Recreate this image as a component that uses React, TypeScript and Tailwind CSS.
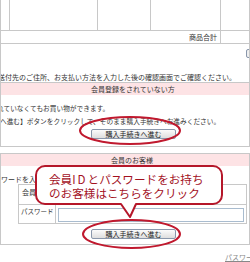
const font = { fontFamily: '"Noto Sans CJK JP", "Noto Sans", sans-serif' };

function Btn({ label }: { label: string }) {
  return (
    <div className="flex h-[10px] w-[85px] items-center justify-center rounded-[2px] border border-[#8a97ab] bg-gradient-to-b from-[#fbfbfb] to-[#dedede] text-[7px] leading-none text-[#222]">
      {label}
    </div>
  );
}

function Callout() {
  return (
    <div className="absolute left-[35px] top-[165px] h-[54px] w-[189px]">
      <svg width="189" height="54" viewBox="0 0 189 54" className="absolute inset-0">
        <path
          d="M10,1 H178 A9,9 0 0 1 187,10 V30 A9,9 0 0 1 178,39 H101 L95,52 L86,39 H10 A9,9 0 0 1 1,30 V10 A9,9 0 0 1 10,1 Z"
          fill="#fff"
          stroke="#b5172a"
          strokeWidth="2"
          strokeLinejoin="round"
        />
      </svg>
      <div className="absolute left-[14px] top-[7px] whitespace-nowrap text-[11.6px] leading-[14px] text-[#a3121f]">
        <div>
          会員<span className="tracking-[2px]">ID</span>とパスワードをお持ち
        </div>
        <div>のお客様はこちらをクリック</div>
      </div>
    </div>
  );
}

export default function App() {
  return (
    <div className="relative h-[262px] w-[250px] overflow-hidden bg-white text-[#333]" style={font}>
      {/* cart table */}
      <div className="flex h-[31px] border-b border-[#c8c8c8]">
        <div className="w-[10px] border-x border-[#c8c8c8]" />
        <div className="w-[88px] border-r border-[#c8c8c8]" />
        <div className="w-[53px] border-r border-[#c8c8c8]" />
        <div className="w-[70px] border-r border-[#c8c8c8]" />
        <div className="w-[29px] border-r border-[#c8c8c8]" />
      </div>
      <div className="flex h-[13px] border-b border-[#c8c8c8]">
        <div className="flex w-[221px] items-center justify-end border-x border-[#c8c8c8] pr-[3px] text-[7px] leading-none">
          商品合計
        </div>
        <div className="w-[29px] border-r border-[#c8c8c8]" />
      </div>

      {/* guest */}
      <div className="h-[103px] overflow-hidden border-x border-b border-[#c8c8c8]">
        <div className="mt-[5px] flex h-[9px] pl-[245px]">
          <div className="w-[20px] shrink-0 rounded-[2px] border border-[#8a97ab] bg-[#eee]" />
        </div>
        <div className="-ml-[3px] mt-[14px] whitespace-nowrap text-[7px] leading-[10px]">
          送付先のご住所、お支払い方法を入力した後の確認画面でご確認ください。
        </div>
        <div className="flex h-[13px] items-center border-t border-[#c8c8c8] bg-[#fde3e5] pl-[90px] text-[7px] leading-none">
          会員登録をされていない方
        </div>
        <div className="mt-[7px] whitespace-nowrap text-[6.7px] leading-[13px]">
          <div className="-ml-[4px]">れていなくてもお買い物ができます。</div>
          <div className="-ml-[1px]">へ進む】ボタンをクリックして、そのまま購入手続きへお進みください。</div>
        </div>
        <div className="mt-[1px] flex pl-[90px]">
          <Btn label="購入手続きへ進む" />
        </div>
      </div>

      {/* member */}
      <div className="mt-[6px] h-[92px] overflow-hidden border-x border-b border-[#c8c8c8]">
        <div className="flex h-[13px] items-center border-t border-[#c8c8c8] bg-[#fde3e5] pl-[110px] text-[7px] leading-none">
          会員のお客様
        </div>
        <div className="-ml-[14px] mt-[8px] whitespace-nowrap text-[7px] leading-[10px]">
          パスワードを入力してください。
        </div>
        <div className="ml-[17px] w-[229px] border border-[#c8c8c8] text-[7px] leading-none">
          <div className="flex h-[20px] border-b border-[#c8c8c8]">
            <div className="w-[37px] border-r border-[#c8c8c8] pl-[3px] pt-[4px] whitespace-nowrap">会員ID</div>
            <div className="pl-[2px] pt-[3px]">
              <div className="h-[14px] w-[150px] border border-[#a9bccf]" />
            </div>
          </div>
          <div className="flex h-[18px]">
            <div className="w-[37px] overflow-hidden whitespace-nowrap border-r border-[#c8c8c8] pl-[2px] pt-[3px] text-[6.5px]">
              パスワード
            </div>
            <div className="pl-[2px] pt-[3px]">
              <div className="h-[14px] w-[186px] border border-[#a9bccf]" />
            </div>
          </div>
        </div>
        <div className="mt-[5px] flex pl-[90px]">
          <Btn label="購入手続きへ進む" />
        </div>
      </div>

      <div className="mt-[7px] flex pl-[225px]">
        <span className="whitespace-nowrap text-[7px] leading-[10px] text-[#888] underline">パスワードをお忘れの方</span>
      </div>

      {/* highlights */}
      <svg width="250" height="262" className="pointer-events-none absolute left-0 top-0">
        <ellipse cx="130" cy="130.5" rx="50" ry="13.5" fill="none" stroke="#c0192e" strokeWidth="2" />
        <ellipse cx="131.5" cy="234" rx="48.5" ry="14" fill="none" stroke="#c0192e" strokeWidth="2" />
      </svg>
      <Callout />
    </div>
  );
}
